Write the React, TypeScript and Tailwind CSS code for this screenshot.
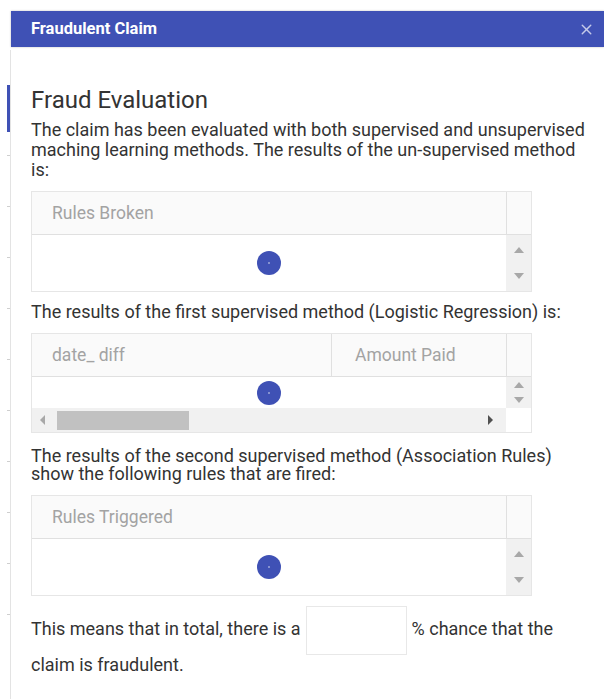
import { X } from 'lucide-react';

const FONT = "font-['Roboto','Liberation_Sans',Arial,sans-serif]";

// tick marks on the page behind the dialog
const TICKS = [0, 1, 2, 3, 4, 5, 6, 7, 8, 9];

function Spinner() {
  return (
    <div className="flex h-[24px] w-[24px] items-center justify-center rounded-full bg-[#3f51b5]">
      <div className="h-[2px] w-[2px] rounded-full bg-[#9fa8da]" />
    </div>
  );
}

function ArrowUp() {
  return <div className="h-0 w-0 border-x-[5px] border-b-[6px] border-x-transparent border-b-[#a8a8a8]" />;
}

function ArrowDown() {
  return <div className="h-0 w-0 border-x-[5px] border-t-[6px] border-x-transparent border-t-[#a8a8a8]" />;
}

function VScroll({ compact }: { compact?: boolean }) {
  return (
    <div
      className={`flex w-[25px] shrink-0 flex-col items-center justify-between bg-[#f1f1f1] ${
        compact ? 'py-[5px]' : 'py-[12px]'
      }`}
    >
      <ArrowUp />
      <ArrowDown />
    </div>
  );
}

function HeaderGutter() {
  return <div className="w-[25px] shrink-0 border-l border-[#e0e0e0] bg-[#fafafa]" />;
}

function SingleColumnGrid({ title }: { title: string }) {
  return (
    <div className="w-[501px] border border-[#e6e6e6]">
      <div className="flex h-[43px] border-b border-[#e0e0e0] bg-[#fafafa]">
        <div className="flex flex-1 items-center pl-[20px] text-[17.5px] text-[#a3a3a3]">{title}</div>
        <HeaderGutter />
      </div>
      <div className="flex h-[56px]">
        <div className="flex flex-1 items-center justify-center bg-white">
          <Spinner />
        </div>
        <VScroll />
      </div>
    </div>
  );
}

function RegressionGrid() {
  return (
    <div className="w-[501px] border border-[#e6e6e6]">
      <div className="flex h-[43px] border-b border-[#e0e0e0] bg-[#fafafa] text-[17.5px] text-[#a3a3a3]">
        <div className="flex w-[300px] items-center border-r border-[#e0e0e0] pl-[20px]">date_ diff</div>
        <div className="flex flex-1 items-center pl-[23px]">Amount Paid</div>
        <HeaderGutter />
      </div>
      <div className="flex h-[31px]">
        <div className="flex flex-1 items-center justify-center bg-white">
          <Spinner />
        </div>
        <VScroll compact />
      </div>
      <div className="flex h-[24px]">
        <div className="flex flex-1 items-center bg-[#f1f1f1]">
          <div className="ml-[8px] h-0 w-0 border-y-[5px] border-r-[5px] border-y-transparent border-r-[#a8a8a8]" />
          <div className="ml-[12px] h-[19px] w-[132px] bg-[#c1c1c1]" />
          <div className="ml-auto mr-[13px] h-0 w-0 border-y-[5px] border-l-[5px] border-y-transparent border-l-[#505050]" />
        </div>
        <div className="w-[25px] shrink-0 bg-white" />
      </div>
    </div>
  );
}

export default function App() {
  return (
    <div className={`flex h-[699px] w-[604px] overflow-hidden bg-white text-[#333] ${FONT}`}>
      {/* page edge peeking out behind the dialog */}
      <div className="flex w-[11px] shrink-0 flex-col">
        <div className="mt-[50px] flex flex-1 flex-col items-end border-r border-[#e3e3e3]">
          <div className="mt-[35px] h-[47px] w-[3px] bg-[#3f51b5]" />
          {TICKS.map((i) => (
            <div key={i} className={`h-px w-[3px] bg-[#cfcfcf] ${i === 0 ? 'mt-[23px]' : 'mt-[50px]'}`} />
          ))}
        </div>
      </div>

      <div className="flex min-w-0 flex-1 flex-col pt-[11px]">
        <div className="flex h-[36px] items-center justify-between bg-[#3f51b5] pl-[20px] pr-[9px] shadow-[0_0_2px_rgba(0,0,0,0.25)]">
          <span className="text-[16.5px] font-bold text-white">Fraudulent Claim</span>
          <X className="h-[17px] w-[17px] text-[#c5cae9]" strokeWidth={2} />
        </div>

        <div className="flex w-[582px] flex-col pl-[20px] pt-[40px]">
          <h1 className="text-[24px] font-normal leading-[26px] text-[#333]">Fraud Evaluation</h1>
          <p className="mt-[7px] text-[18px] leading-[20px]">
            The claim has been evaluated with both supervised and unsupervised maching learning methods. The results
            of the un-supervised method is:
          </p>
          <div className="mt-[11px]">
            <SingleColumnGrid title="Rules Broken" />
          </div>

          <p className="mt-[10px] text-[18px] leading-[19px]">
            The results of the first supervised method (Logistic Regression) is:
          </p>
          <div className="mt-[12px]">
            <RegressionGrid />
          </div>

          <p className="mt-[14px] text-[18px] leading-[18px]">
            The results of the second supervised method (Association Rules) show the following rules that are fired:
          </p>
          <div className="mt-[12px]">
            <SingleColumnGrid title="Rules Triggered" />
          </div>

          <p className="mt-[10px] text-[18px] leading-[19px]">
            This means that in total, there is a
            <input
              type="text"
              className="mx-[5px] inline-block h-[49px] w-[101px] border border-[#e8e8e8] align-middle outline-none"
            />
            % chance that the claim is fraudulent.
          </p>
        </div>
      </div>
    </div>
  );
}
